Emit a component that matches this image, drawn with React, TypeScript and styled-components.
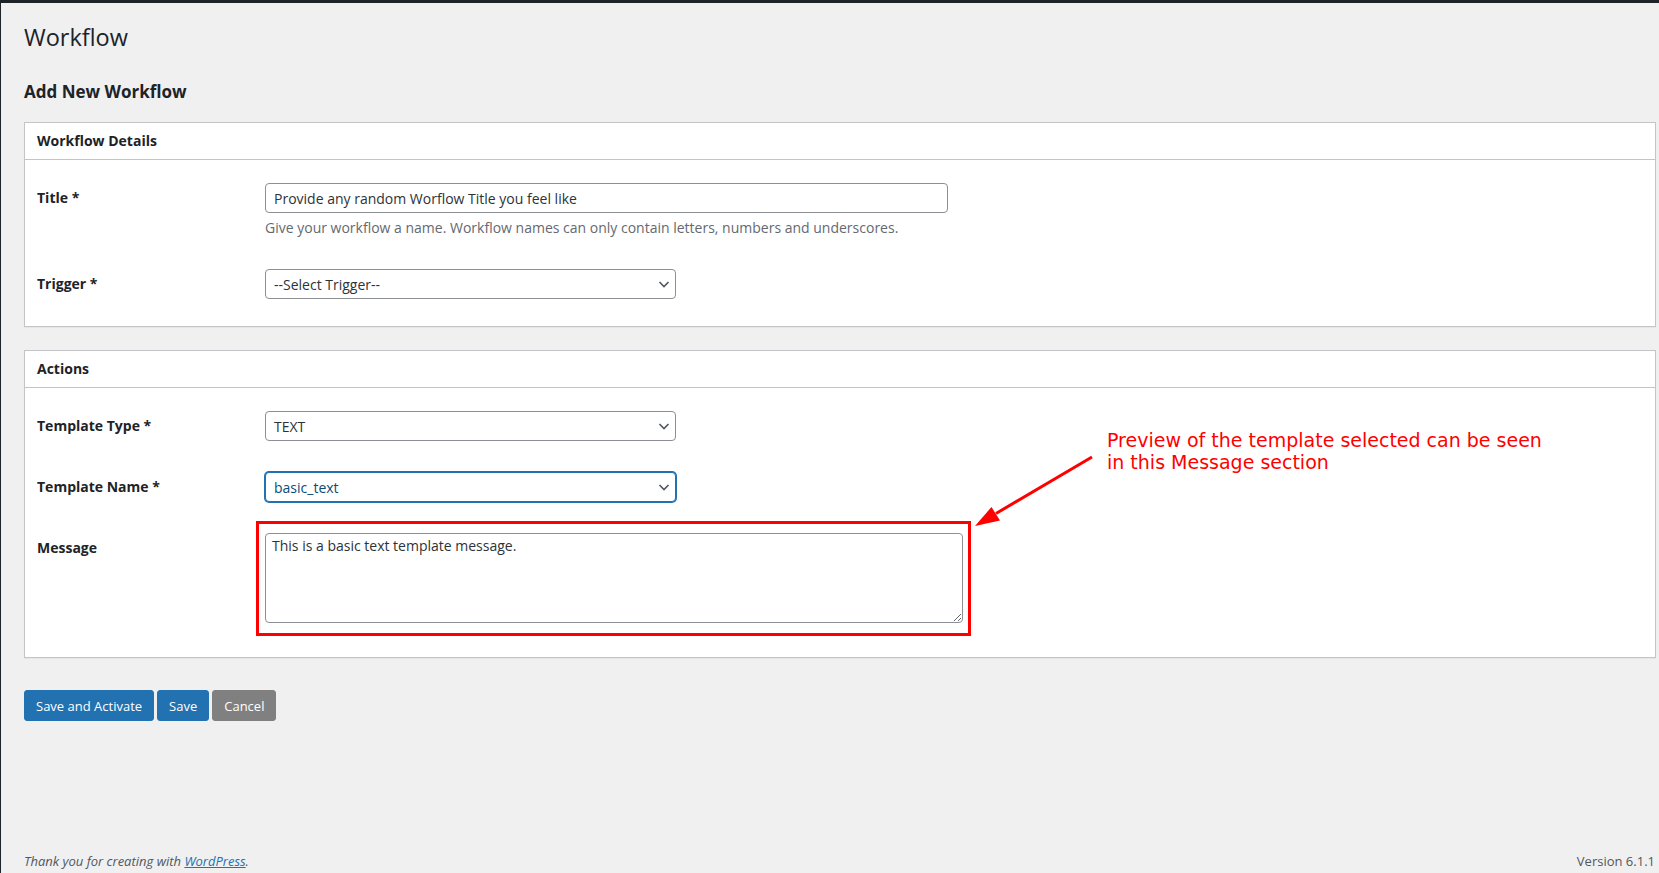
import styled, { createGlobalStyle } from 'styled-components';

const GlobalStyle = createGlobalStyle`
  * { box-sizing: border-box; }
  html, body {
    margin: 0;
    padding: 0;
    background: #f0f0f1;
  }
  body {
    font-family: "Open Sans", "Noto Sans", sans-serif;
    font-size: 13px;
    color: #3c434a;
  }
`;

const Page = styled.div`
  display: flex;
  flex-direction: column;
  min-height: 100vh;
`;

const TopBar = styled.div`
  height: 3px;
  background: #1d2327;
`;

const Shell = styled.div`
  flex: 1;
  display: flex;
`;

const AdminEdge = styled.div`
  width: 1px;
  background: #1d2327;
`;

const Main = styled.main`
  flex: 1;
  display: flex;
  flex-direction: column;
  padding: 0 3px 2px 23px;
`;

const PageTitle = styled.h1`
  margin: 19px 0 0;
  font-size: 23.5px;
  font-weight: 400;
  line-height: 30px;
  color: #1d2327;
`;

const FormTitle = styled.h2`
  margin: 29px 0 19px;
  font-size: 17px;
  font-weight: 700;
  line-height: 22px;
  color: #1d2327;
`;

const Panel = styled.section<{ $gapTop?: number }>`
  position: relative;
  margin-top: ${(p) => p.$gapTop ?? 0}px;
  background: #fff;
  border: 1px solid #c3c4c7;
  box-shadow: 0 1px 1px rgba(0, 0, 0, 0.04);
`;

const PanelHeader = styled.h3`
  margin: 0;
  padding: 8px 12px;
  font-size: 14px;
  font-weight: 700;
  line-height: 20px;
  color: #1d2327;
  border-bottom: 1px solid #c3c4c7;
`;

const PanelBody = styled.div<{ $padBottom: number }>`
  display: flex;
  flex-direction: column;
  gap: 31px;
  padding: 23px 12px ${(p) => p.$padBottom}px;
`;

const FieldRow = styled.div`
  display: grid;
  grid-template-columns: 228px 1fr;
  align-items: start;
`;

const Label = styled.label`
  font-size: 14px;
  font-weight: 700;
  line-height: 30px;
  color: #1d2327;
`;

const TextInput = styled.input<{ $width: number }>`
  display: block;
  width: ${(p) => p.$width}px;
  height: 30px;
  margin: 0;
  padding: 0 8px;
  font-family: inherit;
  font-size: 14px;
  color: #2c3338;
  background: #fff;
  border: 1px solid #8c8f94;
  border-radius: 4px;
  outline: none;
`;

const Description = styled.p`
  margin: 5px 0 0;
  font-size: 14px;
  line-height: 20px;
  color: #646970;
`;

const SelectBox = styled.div<{ $focused?: boolean }>`
  display: flex;
  align-items: center;
  justify-content: space-between;
  width: 411px;
  height: 30px;
  padding: 0 3px 0 8px;
  font-size: 14px;
  color: ${(p) => (p.$focused ? '#0a4b78' : '#2c3338')};
  background: #fff;
  border: 1px solid ${(p) => (p.$focused ? '#2271b1' : '#8c8f94')};
  border-radius: 4px;
  box-shadow: ${(p) => (p.$focused ? '0 0 0 1px #2271b1' : 'none')};
`;

const Chevron = styled.svg`
  width: 16px;
  height: 16px;
  flex: none;
`;

const MessageWrap = styled.div`
  position: relative;
  width: 698px;
`;

const MessageArea = styled.textarea`
  display: block;
  width: 698px;
  height: 90px;
  margin: 0;
  padding: 2px 6px;
  font-family: inherit;
  font-size: 14px;
  line-height: 20px;
  color: #2c3338;
  background: #fff;
  border: 1px solid #8c8f94;
  border-radius: 4px;
  outline: none;
`;

const Highlight = styled.div`
  position: absolute;
  inset: -12px -8px -13px -9px;
  border: 3px solid #ff0000;
  pointer-events: none;
`;

const Note = styled.div`
  position: absolute;
  left: 1082px;
  top: 78px;
  font-family: "DejaVu Sans", sans-serif;
  font-size: 19px;
  line-height: 22px;
  color: #ff0000;
`;

const Arrow = styled.svg`
  position: absolute;
  left: 945px;
  top: 101px;
  width: 126px;
  height: 78px;
  overflow: visible;
`;

const ButtonRow = styled.div`
  display: flex;
  gap: 3px;
  margin-top: 32px;
`;

const Button = styled.button<{ $muted?: boolean }>`
  height: 31px;
  padding: 0 11px;
  font-family: inherit;
  font-size: 13px;
  color: #fff;
  background: ${(p) => (p.$muted ? '#808080' : '#2271b1')};
  border: 1px solid ${(p) => (p.$muted ? '#808080' : '#2271b1')};
  border-radius: 3px;
  cursor: pointer;
`;

const Footer = styled.footer`
  display: flex;
  justify-content: space-between;
  align-items: center;
  margin-top: auto;
  padding-right: 1px;
  font-size: 13px;
  line-height: 20px;
  color: #50575e;
`;

const Thanks = styled.span`
  font-style: italic;

  a {
    color: #2271b1;
    text-decoration: underline;
  }
`;

const Select = ({ value, focused }: { value: string; focused?: boolean }) => (
  <SelectBox $focused={focused}>
    <span>{value}</span>
    <Chevron viewBox="0 0 16 16">
      <polyline points="3.5,6 8,10.5 12.5,6" fill="none" stroke="#50575e" strokeWidth="1.6" />
    </Chevron>
  </SelectBox>
);

const App = () => {
  return (
    <>
      <GlobalStyle />
      <Page>
        <TopBar />
        <Shell>
          <AdminEdge />
          <Main>
            <PageTitle>Workflow</PageTitle>
            <FormTitle>Add New Workflow</FormTitle>

            <Panel>
              <PanelHeader>Workflow Details</PanelHeader>
              <PanelBody $padBottom={27}>
                <FieldRow>
                  <Label>Title *</Label>
                  <div>
                    <TextInput $width={683} value="Provide any random Worflow Title you feel like" readOnly />
                    <Description>
                      Give your workflow a name. Workflow names can only contain letters, numbers and underscores.
                    </Description>
                  </div>
                </FieldRow>
                <FieldRow>
                  <Label>Trigger *</Label>
                  <Select value="--Select Trigger--" />
                </FieldRow>
              </PanelBody>
            </Panel>

            <Panel $gapTop={23}>
              <PanelHeader>Actions</PanelHeader>
              <PanelBody $padBottom={34}>
                <FieldRow>
                  <Label>Template Type *</Label>
                  <Select value="TEXT" />
                </FieldRow>
                <FieldRow>
                  <Label>Template Name *</Label>
                  <Select value="basic_text" focused />
                </FieldRow>
                <FieldRow>
                  <Label>Message</Label>
                  <MessageWrap>
                    <MessageArea value="This is a basic text template message." readOnly />
                    <Highlight />
                  </MessageWrap>
                </FieldRow>
              </PanelBody>

              <Note>
                Preview of the template selected can be seen
                <br />
                in this Message section
              </Note>
              <Arrow viewBox="0 0 126 78">
                <line x1="122" y1="5" x2="26" y2="61.5" stroke="#ff0000" strokeWidth="3" />
                <polygon points="5,74 30,68.5 21.5,55" fill="#ff0000" />
              </Arrow>
            </Panel>

            <ButtonRow>
              <Button>Save and Activate</Button>
              <Button>Save</Button>
              <Button $muted>Cancel</Button>
            </ButtonRow>

            <Footer>
              <Thanks>
                Thank you for creating with <a href="#">WordPress</a>.
              </Thanks>
              <span>Version 6.1.1</span>
            </Footer>
          </Main>
        </Shell>
      </Page>
    </>
  );
};

export default App;
